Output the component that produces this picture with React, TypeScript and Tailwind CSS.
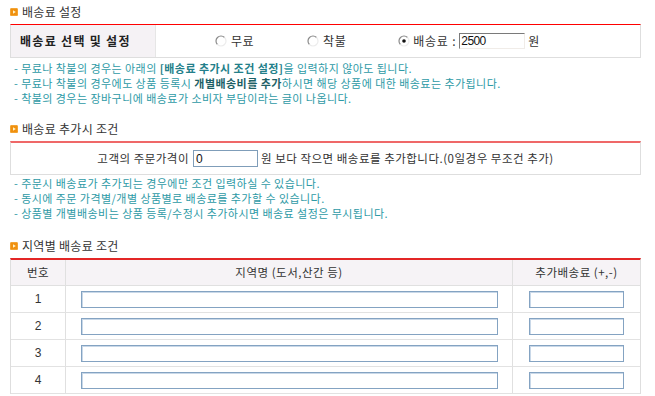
import React from "react";

const Icon = () => (
  <svg width="8" height="8" viewBox="0 0 8 8" className="shrink-0">
    <rect x="0" y="0" width="8" height="8" rx="1.5" fill="#f0900f" />
    <rect x="0.5" y="0.5" width="7" height="7" rx="1.2" fill="none" stroke="#f7b24a" strokeWidth="0.6" />
    <path d="M3 2.2 L5.8 4 L3 5.8Z" fill="#fff4c8" />
  </svg>
);

const Radio = ({ checked }: { checked?: boolean }) => (
  <svg width="12" height="12" viewBox="0 0 12 12" className="shrink-0">
    <circle cx="6" cy="6" r="5" fill="#fff" />
    <path d="M2.46 9.54 A5 5 0 0 1 9.54 2.46" stroke="#8a8a8a" strokeWidth="1.2" fill="none" />
    <path d="M9.54 2.46 A5 5 0 0 1 2.46 9.54" stroke="#ececec" strokeWidth="1.2" fill="none" />
    {checked && <circle cx="6" cy="6" r="1.8" fill="#111" />}
  </svg>
);

const Title = ({ children }: { children: React.ReactNode }) => (
  <div className="h-[24px] flex items-center gap-[4px] text-[12px] text-[#333] leading-none tracking-[0.3px]">
    <Icon />
    <span>{children}</span>
  </div>
);

const rows = [1, 2, 3, 4];

export default function App() {
  return (
    <div className="w-[655px] h-[396px] overflow-hidden bg-white font-['Noto_Sans_CJK_KR',sans-serif] text-[#333]">
      <div className="ml-[10px] w-[631px]">
        {/* Section 1 */}
        <Title>배송료 설정</Title>
        <div className="border-t border-t-[#ff0000] border-x border-b border-x-[#dedede] border-b-[#dedede] h-[34px] flex">
          <div className="w-[145px] bg-[#f5f2f5] border-r border-[#e6e6e6] flex items-center pl-[9px] text-[12px] font-bold text-[#222] tracking-[1.3px]">
            배송료 선택 및 설정
          </div>
          <div className="flex-1 flex items-center text-[12px] text-[#333]">
            <div className="ml-[59px] flex items-center">
              <Radio />
              <span className="ml-[4px] tracking-[0.5px]">무료</span>
            </div>
            <div className="ml-[53px] flex items-center">
              <Radio />
              <span className="ml-[4px] tracking-[0.5px]">착불</span>
            </div>
            <div className="ml-[52px] flex items-center">
              <Radio checked />
              <span className="ml-[3px] tracking-[0.8px]">배송료 :</span>
              <input
                readOnly
                value="2500"
                className="ml-[3px] w-[66px] h-[16px] bg-white border border-t-[#7a7a7a] border-l-[#7a7a7a] border-b-[#f0ece8] border-r-[#f0ece8] pl-[1px] text-[12px] font-['Liberation_Sans',sans-serif] tracking-[-0.6px] text-[#111] outline-none"
              />
              <span className="ml-[3px]">원</span>
            </div>
          </div>
        </div>
        <div className="mt-[3px] pl-[4px] text-[11px] leading-[15px] text-[#2e9aa6] tracking-[0.45px]">
          <div>
            - 무료나 착불의 경우는 아래의 <b className="text-[#237f8a]">[배송료 추가시 조건 설정]</b>을 입력하지 않아도 됩니다.
          </div>
          <div>
            - 무료나 착불의 경우에도 상품 등록시 <b className="text-[#1d5f66]">개별배송비를 추가</b>하시면 해당 상품에 대한 배송료는 추가됩니다.
          </div>
          <div>- 착불의 경우는 장바구니에 배송료가 소비자 부담이라는 글이 나옵니다.</div>
        </div>

        {/* Section 2 */}
        <div className="mt-[11px]">
          <Title>배송료 추가시 조건</Title>
        </div>
        <div className="border-t-2 border-t-[#ef6868] border-x border-b border-x-[#dedede] border-b-[#dedede] h-[34px] flex items-center justify-center text-[11.5px] text-[#333] tracking-[0.5px]">
          <span>고객의 주문가격이</span>
          <input
            readOnly
            value="0"
            className="ml-[4px] w-[65px] h-[17px] bg-white border border-[#7f9db9] pl-[2px] text-[12px] font-['Liberation_Sans',sans-serif] text-[#111] outline-none"
          />
          <span className="ml-[3px]">원 보다 작으면 배송료를 추가합니다.(0일경우 무조건 추가)</span>
        </div>
        <div className="mt-[1px] pl-[4px] text-[11px] leading-[15px] text-[#2e9aa6] tracking-[0.45px]">
          <div>- 주문시 배송료가 추가되는 경우에만 조건 입력하실 수 있습니다.</div>
          <div>- 동시에 주문 가격별/개별 상품별로 배송료를 추가할 수 있습니다.</div>
          <div>- 상품별 개별배송비는 상품 등록/수정시 추가하시면 배송료 설정은 무시됩니다.</div>
        </div>

        {/* Section 3 */}
        <div className="mt-[13px]">
          <Title>지역별 배송료 조건</Title>
        </div>
        <div className="border-t-2 border-t-[#e32626] border-x border-x-[#dedede]">
          <div className="grid grid-cols-[54px_447px_1fr] h-[26px] bg-[#f6f3f6] border-b border-[#e0e0e0] text-[11.5px] text-[#333] tracking-[0.5px]">
            <div className="flex items-center justify-center">번호</div>
            <div className="flex items-center justify-center border-l border-[#e0e0e0]">지역명 (도서,산간 등)</div>
            <div className="flex items-center justify-center border-l border-[#e0e0e0]">추가배송료 (+,-)</div>
          </div>
          {rows.map((n) => (
            <div key={n} className="grid grid-cols-[54px_447px_1fr] h-[27px] border-b border-[#e2e2e2] text-[12px] text-[#333]">
              <div className="flex items-center justify-center font-['Liberation_Sans',sans-serif]">{n}</div>
              <div className="flex items-center justify-center border-l border-[#e0e0e0]">
                <input readOnly className="w-[417px] h-[17px] bg-white border border-[#84a3c2] shadow-[inset_1px_1px_0_#c9d8e8] outline-none" />
              </div>
              <div className="flex items-center justify-center border-l border-[#e0e0e0]">
                <input readOnly className="w-[95px] h-[17px] bg-white border border-[#84a3c2] shadow-[inset_1px_1px_0_#c9d8e8] outline-none" />
              </div>
            </div>
          ))}
        </div>
      </div>
    </div>
  );
}
